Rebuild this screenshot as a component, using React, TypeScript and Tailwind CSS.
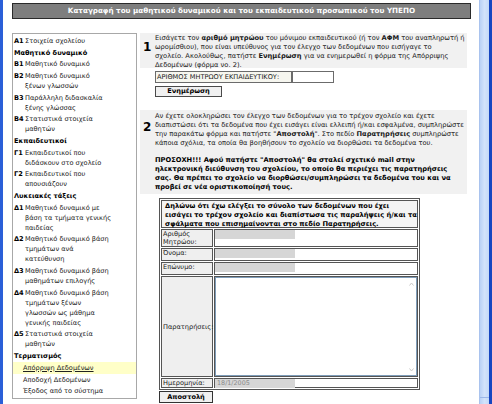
import React from "react";

type NavItem =
  | { kind: "h"; text: string }
  | { kind: "i"; code: string; lines: string[] }
  | { kind: "l"; text: string; active?: boolean };

const nav: NavItem[] = [
  { kind: "i", code: "Α1", lines: ["Στοιχεία σχολείου"] },
  { kind: "h", text: "Μαθητικό δυναμικό" },
  { kind: "i", code: "Β1", lines: ["Μαθητικό δυναμικό"] },
  { kind: "i", code: "Β2", lines: ["Μαθητικό δυναμικό", "ξένων γλωσσών"] },
  { kind: "i", code: "Β3", lines: ["Παράλληλη διδασκαλία", "ξένης γλώσσας"] },
  { kind: "i", code: "Β4", lines: ["Στατιστικά στοιχεία", "μαθητών"] },
  { kind: "h", text: "Εκπαιδευτικοί" },
  { kind: "i", code: "Γ1", lines: ["Εκπαιδευτικοί που", "διδάσκουν στο σχολείο"] },
  { kind: "i", code: "Γ2", lines: ["Εκπαιδευτικοί που", "απουσιάζουν"] },
  { kind: "h", text: "Λυκειακές τάξεις" },
  { kind: "i", code: "Δ1", lines: ["Μαθητικό δυναμικό με", "βάση τα τμήματα γενικής", "παιδείας"] },
  { kind: "i", code: "Δ2", lines: ["Μαθητικό δυναμικό βάση", "τμημάτων ανά", "κατεύθυνση"] },
  { kind: "i", code: "Δ3", lines: ["Μαθητικό δυναμικό βάση", "μαθημάτων επιλογής"] },
  { kind: "i", code: "Δ4", lines: ["Μαθητικό δυναμικό βάση", "τμημάτων ξένων", "γλωσσών ως μάθημα", "γενικής παιδείας"] },
  { kind: "i", code: "Δ5", lines: ["Στατιστικά στοιχεία", "μαθητών"] },
  { kind: "h", text: "Τερματισμός" },
  { kind: "l", text: "Απόρριψη Δεδομένων", active: true },
  { kind: "l", text: "Αποδοχή Δεδομένων" },
  { kind: "l", text: "Έξοδος από το σύστημα" },
];

function Nav() {
  return (
    <div className="w-[125px] h-[366px] border border-[#a8a8a8] bg-white pt-[1px] text-[6.6px] leading-[10px] text-[#222]">
      {nav.map((it, i) => {
        if (it.kind === "h")
          return (
            <div key={i} className="py-[0.85px] pl-[1px] font-bold text-black">
              {it.text}
            </div>
          );
        if (it.kind === "l")
          return (
            <div
              key={i}
              className={
                "py-[0.85px] pl-[10px] " + (it.active ? "bg-[#ffffc8] underline" : "")
              }
            >
              {it.text}
            </div>
          );
        return (
          <div key={i} className="py-[0.85px] pl-[1px] flex">
            <span className="w-[11px] shrink-0 font-bold text-black">{it.code}</span>
            <div className="whitespace-nowrap">
              {it.lines.map((l, j) => (
                <div key={j}>{l}</div>
              ))}
            </div>
          </div>
        );
      })}
    </div>
  );
}

function GrayInput({ text }: { text?: string }) {
  return (
    <div className="w-[80px] h-[9px] bg-[#d6d6d6] text-[#8a8a8a] text-[6.4px] leading-[9px] pl-[2px]">
      {text}
    </div>
  );
}

function Row({
  label,
  h,
  children,
  center,
}: {
  label: React.ReactNode;
  h: string;
  children: React.ReactNode;
  center?: boolean;
}) {
  return (
    <div className={"flex gap-[1px] " + h}>
      <div
        className={
          "w-[52px] shrink-0 border border-[#555] bg-[#efefef] px-[1px] text-[6.6px] leading-[8px] flex " +
          (center ? "items-center" : "items-start")
        }
      >
        <div>{label}</div>
      </div>
      <div className="flex-1 border border-[#555] bg-white">{children}</div>
    </div>
  );
}

export default function App() {
  return (
    <div
      className="relative w-[492px] h-[404px] overflow-hidden bg-white flex text-[#1a1a1a]"
      style={{ fontFamily: '"DejaVu Sans", Verdana, sans-serif' }}
    >
      {/* left window frame */}
      <div className="w-[3px] shrink-0 bg-[#2a5fd8]" />

      {/* page */}
      <div className="w-[476px] shrink-0 pl-[9px] pt-[3px]">
        <div className="w-[459px] h-[16px] bg-[#7e7e7e] border border-[#2a2a2a] flex items-center justify-center text-white font-bold text-[7.2px]">
          Καταγραφή του μαθητικού δυναμικού και του εκπαιδευτικού προσωπικού του ΥΠΕΠΟ
        </div>

        <div className="flex mt-[14px]">
          <Nav />

          <div className="ml-[3px] w-[327px] text-[6.7px] leading-[9px]">
            {/* Section 1 */}
            <div className="bg-[#f1f1f1] h-[35px] flex pt-[1px]">
              <div className="w-[15px] shrink-0 pl-[3px] pt-[7px] font-bold text-[12px] leading-[12px] text-black">
                1
              </div>
              <div className="whitespace-nowrap">
                <div>
                  Εισάγετε τον <b>αριθμό μητρώου</b> του μόνιμου εκπαιδευτικού (ή τον <b>ΑΦΜ</b> του αναπληρωτή ή
                </div>
                <div>ωρομίσθιου), που είναι υπεύθυνος για τον έλεγχο των δεδομένων που εισήγαγε το</div>
                <div>
                  σχολείο. Ακολούθως, πατήστε <b>Ενημέρωση</b> για να ενημερωθεί η φόρμα της Απόρριψης
                </div>
                <div>Δεδομένων (φόρμα νο. 2).</div>
              </div>
            </div>

            <div className="pl-[15px] mt-[3px]">
              <div className="flex">
                <div className="h-[12px] w-[137px] border border-[#6b6b6b] bg-[#f6f6ef] text-[6.6px] leading-[10px] pl-[1px] whitespace-nowrap overflow-hidden">
                  ΑΡΙΘΜΟΣ ΜΗΤΡΩΟΥ ΕΚΠΑΙΔΕΥΤΙΚΟΥ:
                </div>
                <div className="h-[12px] w-[42px] border border-[#6b6b6b] bg-white" />
              </div>
              <div className="mt-[3px] w-[67px] h-[11px] border border-[#4a4a4a] bg-[#f0f0f0] flex items-center justify-center font-bold text-[6.6px] text-black">
                Ενημέρωση
              </div>
            </div>

            {/* Section 2 */}
            <div className="mt-[13px] bg-[#f1f1f1] h-[84px] flex pt-[2px]">
              <div className="w-[15px] shrink-0 pl-[3px] pt-[9px] font-bold text-[12px] leading-[12px] text-black">
                2
              </div>
              <div className="whitespace-nowrap">
                <div>Αν έχετε ολοκληρώσει τον έλεγχο των δεδομένων για το τρέχον σχολείο και έχετε</div>
                <div>
                  διαπιστώσει ότι τα δεδομένα που έχει εισάγει είναι ελλειπή ή/και εσφαλμένα, συμπληρώστε
                </div>
                <div>
                  την παρακάτω φόρμα και πατήστε "<b>Αποστολή</b>". Στο πεδίο <b>Παρατηρήσεις</b> συμπληρώστε
                </div>
                <div>κάποια σχόλια, τα οποία θα βοηθήσουν το σχολείο να διορθώσει τα δεδομένα του.</div>
                <div className="mt-[8px] font-bold text-black">
                  <div>ΠΡΟΣΟΧΗ!!! Αφού πατήστε "Αποστολή" θα σταλεί σχετικό mail στην</div>
                  <div>ηλεκτρονική διεύθυνση του σχολείου, το οποίο θα περιέχει τις παρατηρήσεις</div>
                  <div>σας. Θα πρέπει το σχολείο να διορθώσει/συμπληρώσει τα δεδομένα του και να</div>
                  <div>προβεί σε νέα οριστικοποίησή τους.</div>
                </div>
              </div>
            </div>

            {/* Form */}
            <div className="ml-[19px] mt-[4px] w-[261px]">
              <div className="border border-[#555] p-[1px] flex flex-col gap-[1px]">
                <div className="border border-[#555] bg-[#f4f4f4] h-[28px] px-[3px] pt-[1px] font-bold text-black text-[6.7px] leading-[9px] whitespace-nowrap">
                  <div>Δηλώνω ότι έχω ελέγξει το σύνολο των δεδομένων που έχει</div>
                  <div>εισάγει το τρέχον σχολείο και διαπίστωσα τις παραλήψεις ή/και τα</div>
                  <div>σφάλματα που επισημαίνονται στο πεδίο Παρατηρήσεις.</div>
                </div>
                <Row
                  h="h-[18px]"
                  label={
                    <>
                      Αριθμός
                      <br />
                      Μητρώου:
                    </>
                  }
                >
                  <GrayInput />
                </Row>
                <Row h="h-[13px]" label="Όνομα:">
                  <GrayInput />
                </Row>
                <Row h="h-[13px]" label="Επώνυμο:">
                  <GrayInput />
                </Row>
                <Row h="h-[101px]" label="Παρατηρήσεις:" center>
                  <div className="relative h-full border border-[#7f9db9] bg-white">
                    <svg className="absolute right-[2px] top-[4px]" width="5" height="4" viewBox="0 0 5 4">
                      <path d="M0.5 3.5 L2.5 1 L4.5 3.5" stroke="#c8c8c8" fill="none" />
                    </svg>
                    <svg className="absolute right-[2px] bottom-[3px]" width="5" height="4" viewBox="0 0 5 4">
                      <path d="M0.5 0.5 L2.5 3 L4.5 0.5" stroke="#c8c8c8" fill="none" />
                    </svg>
                  </div>
                </Row>
                <Row h="h-[10px]" label="Ημερομηνία:" center>
                  <GrayInput text="18/1/2005" />
                </Row>
              </div>
              <div className="mt-[1px] w-[54px] h-[12px] border border-[#333] bg-[#f0f0f0] flex items-center justify-center font-bold text-black text-[6.6px]">
                Αποστολή
              </div>
            </div>
          </div>
        </div>
      </div>

      {/* scrollbar */}
      <div className="w-[10px] shrink-0 relative bg-gradient-to-r from-[#b9d1f5] via-[#d2e3fb] to-[#c4d9f7] border-l border-[#a9c3ee]">
        <div className="absolute bottom-[6px] left-0 right-0 h-[1px] bg-[#9ab7e8]" />
      </div>
      <div className="w-[3px] shrink-0 bg-[#1646c0]" />
    </div>
  );
}
